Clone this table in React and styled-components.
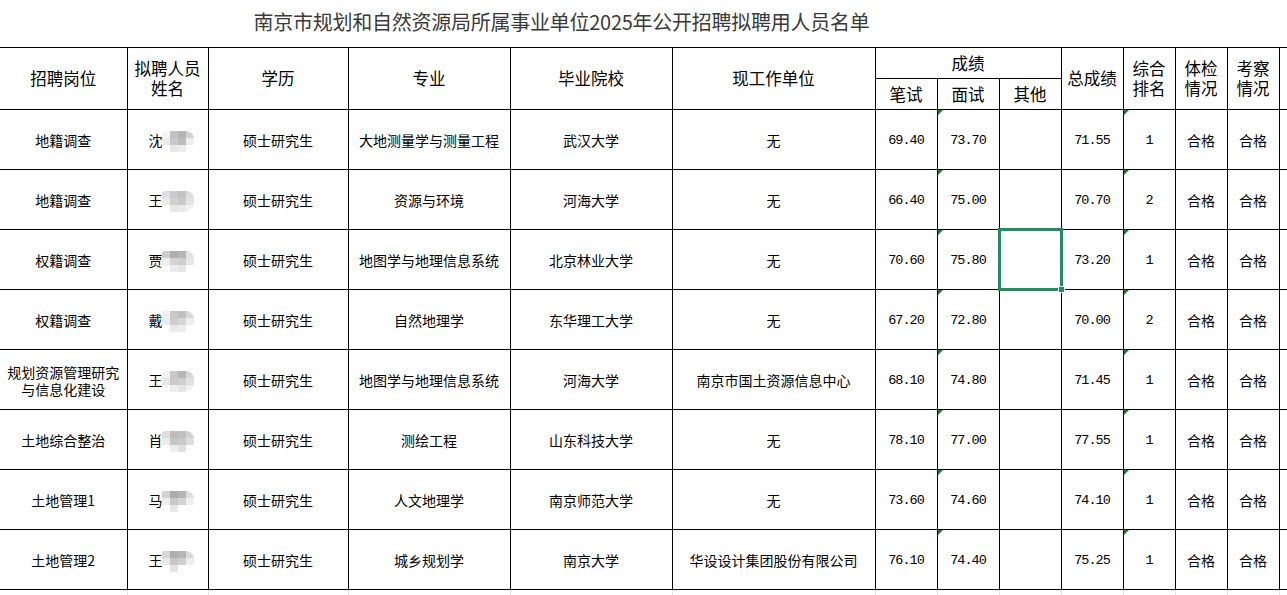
import React from "react";
import styled, { createGlobalStyle } from "styled-components";

const Global = createGlobalStyle`
  html, body { margin: 0; padding: 0; background: #fff; }
  body { font-family: "Noto Sans CJK SC", "Noto Sans", sans-serif; color: #000; overflow: hidden; }
`;

const Sheet = styled.table`
  border-collapse: collapse;
  table-layout: fixed;
  width: 1287px;
`;

const Row = styled.tr`
  height: ${(p) => p.$h}px;
`;

const TitleCell = styled.td`
  padding: 0 0 2px;
  text-align: center;
  vertical-align: middle;
  font-size: 20px;
  line-height: 24px;
  letter-spacing: -0.25px;
  color: #3a3a3a;
  border: none;
`;

const Blank = styled.td`
  border: none;
  padding: 0;
`;

const HeadCell = styled.th`
  border: 1px solid #000;
  border-left: ${(p) => (p.$first ? "none" : "1px solid #000")};
  border-right: ${(p) => (p.$edge ? "none" : "1px solid #000")};
  padding: 0;
  font-weight: 400;
  font-size: 16.5px;
  line-height: 20px;
  text-align: center;
  vertical-align: middle;
  white-space: nowrap;
`;

const Cell = styled.td`
  position: relative;
  border: 1px solid #000;
  border-left: ${(p) => (p.$first ? "none" : "1px solid #000")};
  border-right: ${(p) => (p.$edge ? "none" : "1px solid #000")};
  padding: 3px 0 0;
  font-size: 14px;
  line-height: 17px;
  text-align: center;
  vertical-align: middle;
  white-space: nowrap;
`;

const NumCell = styled(Cell)`
  font-family: "Liberation Mono", "DejaVu Sans Mono", monospace;
  font-size: 13.5px;
  letter-spacing: -1px;
`;

const TailCell = styled.td`
  padding: 0;
  border: none;
  border-right: 1px solid #e2e2e2;
`;

const Triangle = styled.span`
  position: absolute;
  top: 0;
  left: 0;
  width: 0;
  height: 0;
  border-top: 5px solid #1d7b35;
  border-right: 5px solid transparent;
`;

const Selection = styled.span`
  position: absolute;
  top: -2px;
  left: -2px;
  right: -2px;
  bottom: -2px;
  border: 3px solid #1f8f62;
  pointer-events: none;
  &::after {
    content: "";
    position: absolute;
    right: -5px;
    bottom: -5px;
    width: 5px;
    height: 5px;
    background: #1f8f62;
    border: 1px solid #fff;
  }
`;

const NameWrap = styled.span`
  display: inline-flex;
  align-items: center;
  justify-content: center;
  padding-left: 3px;
`;

const Mosaic = styled.span`
  display: inline-grid;
  grid-template-columns: repeat(4, 8px);
  grid-template-rows: repeat(3, 7px);
  margin-left: -1px;
  margin-right: -4px;
  margin-top: 2px;
  filter: blur(0.3px);
  border-radius: 2px 8px 10px 2px;
  overflow: hidden;
`;

const Px = styled.span`
  background: ${(p) => p.$c};
`;

const mosaics = [
  ["#f4f4f4", "#c2c2c2", "#b5b5b5", "#d2d2d2", "#ececec", "#c8c8c8", "#bdbdbd", "#efefef", "#ffffff", "#e8e8e8", "#ececec", "#ffffff"],
  ["#e0e0e0", "#cbcbcb", "#c2c2c2", "#dcdcdc", "#ebebeb", "#d0d0d0", "#c9c9c9", "#e3e3e3", "#ffffff", "#e7e7e7", "#eaeaea", "#f2f2f2"],
  ["#cdcdcd", "#aeaeae", "#b5b5b5", "#e2e2e2", "#eeeeee", "#d3d3d3", "#cecece", "#e8e8e8", "#ffffff", "#ececec", "#e6e6e6", "#ffffff"],
  ["#f0f0f0", "#c8c8c8", "#bfbfbf", "#d8d8d8", "#ebebeb", "#cccccc", "#d6d6d6", "#ededed", "#ffffff", "#e9e9e9", "#eeeeee", "#ffffff"],
  ["#f2f2f2", "#c8c8c8", "#b6b6b6", "#d6d6d6", "#e8e8e8", "#cacaca", "#cfcfcf", "#e0e0e0", "#ffffff", "#eeeeee", "#e4e4e4", "#f0f0f0"],
  ["#dedede", "#bdbdbd", "#c1c1c1", "#d2d2d2", "#ebebeb", "#c6c6c6", "#cbcbcb", "#dddddd", "#ffffff", "#eeeeee", "#e0e0e0", "#ffffff"],
  ["#d2d2d2", "#acacac", "#b5b5b5", "#dedede", "#ececec", "#c9c9c9", "#d3d3d3", "#efefef", "#ffffff", "#e8e8e8", "#ffffff", "#ffffff"],
  ["#d6d6d6", "#afafaf", "#b6b6b6", "#dadada", "#e9e9e9", "#c7c7c7", "#cfcfcf", "#ededed", "#ffffff", "#e4e4e4", "#ffffff", "#ffffff"],
];

const widths = [127, 81, 140, 162, 162, 203, 62, 62, 62, 62, 52, 52, 52, 8];

const rows = [
  ["地籍调查", "沈", "硕士研究生", "大地测量学与测量工程", "武汉大学", "无", "69.40", "73.70", "", "71.55", "1"],
  ["地籍调查", "王", "硕士研究生", "资源与环境", "河海大学", "无", "66.40", "75.00", "", "70.70", "2"],
  ["权籍调查", "贾", "硕士研究生", "地图学与地理信息系统", "北京林业大学", "无", "70.60", "75.80", "", "73.20", "1"],
  ["权籍调查", "戴", "硕士研究生", "自然地理学", "东华理工大学", "无", "67.20", "72.80", "", "70.00", "2"],
  [["规划资源管理研究", "与信息化建设"], "王", "硕士研究生", "地图学与地理信息系统", "河海大学", "南京市国土资源信息中心", "68.10", "74.80", "", "71.45", "1"],
  ["土地综合整治", "肖", "硕士研究生", "测绘工程", "山东科技大学", "无", "78.10", "77.00", "", "77.55", "1"],
  ["土地管理1", "马", "硕士研究生", "人文地理学", "南京师范大学", "无", "73.60", "74.60", "", "74.10", "1"],
  ["土地管理2", "王", "硕士研究生", "城乡规划学", "南京大学", "华设设计集团股份有限公司", "76.10", "74.40", "", "75.25", "1"],
];

function Name({ first, pattern }) {
  return (
    <NameWrap>
      {first}
      <Mosaic>
        {pattern.map((c, i) => (
          <Px key={i} $c={c} />
        ))}
      </Mosaic>
    </NameWrap>
  );
}

export default function App() {
  return (
    <>
      <Global />
      <Sheet>
        <colgroup>
          {widths.map((w, i) => (
            <col key={i} style={{ width: w }} />
          ))}
        </colgroup>
        <tbody>
          <Row $h={47}>
            <TitleCell colSpan={10}>南京市规划和自然资源局所属事业单位2025年公开招聘拟聘用人员名单</TitleCell>
            <Blank />
            <Blank />
            <Blank />
            <Blank />
          </Row>
          <Row $h={31}>
            <HeadCell rowSpan={2} $first>招聘岗位</HeadCell>
            <HeadCell rowSpan={2}>拟聘人员<br />姓名</HeadCell>
            <HeadCell rowSpan={2}>学历</HeadCell>
            <HeadCell rowSpan={2}>专业</HeadCell>
            <HeadCell rowSpan={2}>毕业院校</HeadCell>
            <HeadCell rowSpan={2}>现工作单位</HeadCell>
            <HeadCell colSpan={3}>成绩</HeadCell>
            <HeadCell rowSpan={2}>总成绩</HeadCell>
            <HeadCell rowSpan={2}>综合<br />排名</HeadCell>
            <HeadCell rowSpan={2}>体检<br />情况</HeadCell>
            <HeadCell rowSpan={2}>考察<br />情况</HeadCell>
            <HeadCell rowSpan={2} $edge />
          </Row>
          <Row $h={31}>
            <HeadCell>笔试</HeadCell>
            <HeadCell>面试</HeadCell>
            <HeadCell>其他</HeadCell>
          </Row>
          {rows.map((r, i) => (
            <Row $h={60} key={i}>
              <Cell $first>
                {Array.isArray(r[0]) ? (
                  <>
                    {r[0][0]}
                    <br />
                    {r[0][1]}
                  </>
                ) : (
                  r[0]
                )}
              </Cell>
              <Cell>
                <Name first={r[1]} pattern={mosaics[i]} />
              </Cell>
              <Cell>{r[2]}</Cell>
              <Cell>{r[3]}</Cell>
              <Cell>{r[4]}</Cell>
              <Cell>{r[5]}</Cell>
              <NumCell>{r[6]}</NumCell>
              <NumCell>
                <Triangle />
                {r[7]}
              </NumCell>
              <NumCell>
                {i === 2 && <Selection />}
                {r[8]}
              </NumCell>
              <NumCell>{r[9]}</NumCell>
              <NumCell>
                <Triangle />
                {r[10]}
              </NumCell>
              <Cell>合格</Cell>
              <Cell>合格</Cell>
              <Cell $edge />
            </Row>
          ))}
          <Row $h={6}>
            {widths.map((w, i) => (
              <TailCell key={i} />
            ))}
          </Row>
        </tbody>
      </Sheet>
    </>
  );
}
